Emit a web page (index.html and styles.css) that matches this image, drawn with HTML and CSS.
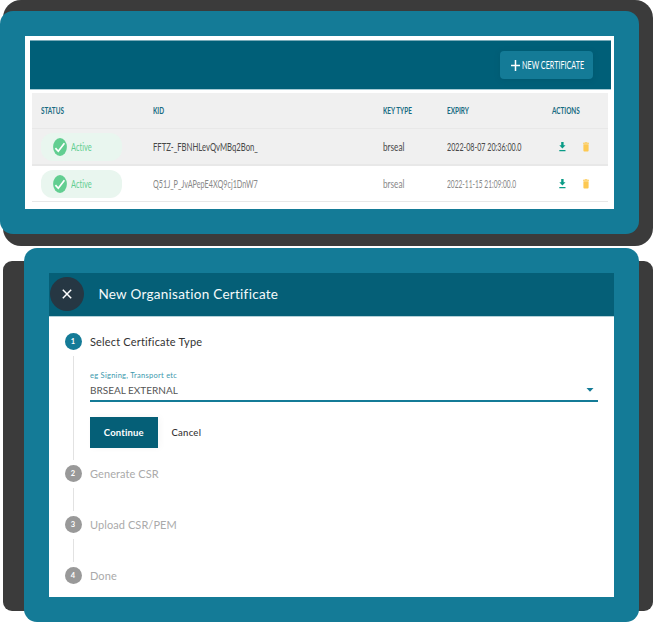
FILE: index.html
```
<!DOCTYPE html>
<html lang="en">
<head>
<meta charset="utf-8">
<title>Organisation Certificates</title>
<link rel="stylesheet" href="styles.css">
</head>
<body>
<svg class="defs" aria-hidden="true">
  <symbol id="check" viewBox="0 0 14 18"><ellipse cx="7" cy="9" rx="6.9" ry="9" fill="#62ce91"/><path d="M2.4 10.2 5.3 13.3 11.4 5.3" fill="none" stroke="#fff" stroke-width="1.7"/></symbol>
  <symbol id="download" viewBox="0 0 7 10"><path d="M2.2 0h2.4v3.3h1.9L3.4 6.6.3 3.3h1.9zM.3 8h6.2v1.3H.3z" fill="#099b86"/></symbol>
  <symbol id="trash" viewBox="0 0 6 10"><path d="M0 .7h1.5L2 .2h2l.5.5H6v1H0zM.4 2.2h5.2v6.3c0 .6-.3 1-.9 1H1.300c-.6 0-.9-.4-.9-1z" fill="#fdc952"/></symbol>
</svg>
<section class="stage list-stage">
  <div class="frame">
    <div class="list">
      <header class="toolbar"><button class="new"><svg class="plus" viewBox="0 0 9 11"><path d="M4.500 0v11M0 5.500h9" stroke="#fff" stroke-width="1.500"/></svg><span class="t new-label">NEW CERTIFICATE</span></button></header>
      <div class="table">
        <div class="row head"><span class="t">STATUS</span><span class="t">KID</span><span class="t">KEY TYPE</span><span class="t">EXPIRY</span><span class="t">ACTIONS</span></div>
        <div class="row selected"><div class="pill"><svg><use href="#check"/></svg><span class="t">Active</span></div><span class="t kid">FFTZ-_FBNHLevQvMBq2Bon_</span><span class="t">brseal</span><span class="t date">2022-08-07 20:36:00.0</span><div class="actions"><svg class="download"><use href="#download"/></svg><svg class="trash"><use href="#trash"/></svg></div></div>
        <div class="row second"><div class="pill"><svg><use href="#check"/></svg><span class="t">Active</span></div><span class="t kid">Q51J_P_JvAPepE4XQ9cj1DnW7</span><span class="t">brseal</span><span class="t date">2022-11-15 21:09:00.0</span><div class="actions"><svg class="download"><use href="#download"/></svg><svg class="trash"><use href="#trash"/></svg></div></div>
      </div>
    </div>
  </div>
</section>
<section class="stage form-stage">
  <div class="frame">
    <div class="dialog">
      <header class="title"><button class="close"><svg viewBox="0 0 10 10"><path d="m.8.8 8.400 8.400M9.200.8.8 9.200" stroke="#fff" stroke-width="1.500"/></svg></button><h1>New Organisation Certificate</h1></header>
      <ol class="steps">
        <li class="step current"><div class="rail"><b>1</b><i></i></div><div class="content"><h2>Select Certificate Type</h2>
          <div class="hint">eg Signing, Transport etc</div>
          <div class="select"><span>BRSEAL EXTERNAL</span><svg viewBox="0 0 7 4"><path d="M0 0h7L3.500 3.800z" fill="#147b97"/></svg></div>
          <div class="buttons"><button class="continue">Continue</button><button class="cancel">Cancel</button></div></div></li>
        <li class="step"><div class="rail"><b>2</b><i></i></div><h2>Generate CSR</h2></li>
        <li class="step"><div class="rail"><b>3</b><i></i></div><h2>Upload CSR/PEM</h2></li>
        <li class="step"><div class="rail"><b>4</b></div><h2>Done</h2></li>
      </ol>
    </div>
  </div>
</section>
</body>
</html>
```
FILE: styles.css
```
* { box-sizing: border-box; }
body { margin: 0; width: 653px; background: #fff; font-family: Lato, "Open Sans", sans-serif; font-variant-ligatures: none; }
button { border: 0; padding: 0; font: inherit; letter-spacing: inherit; }
h1, h2 { margin: 0; font-weight: 400; }
svg { display: block; flex: none; }
.defs { position: absolute; width: 0; height: 0; }

.stage { position: relative; z-index: 0; }
.stage::before { content: ""; position: absolute; z-index: -1; background: #3b3b3b; }
.frame { background: #147b97; padding: 25px; }
.list-stage { height: 246px; padding: 11px 14px 12px 0; }
.list-stage::before { inset: 0 0 0 3px; border-radius: 18px; }
.list-stage .frame { height: 223px; border-radius: 13px; }
.form-stage { height: 374px; margin-top: 2px; padding: 0 14px 0 24px; }
.form-stage::before { inset: 13px 0 11px 3px; border-radius: 9px; }
.form-stage .frame { height: 374px; border-radius: 13px; }

.list { height: 173px; background: #fff; padding: 4px 3px 0 5px; }
.toolbar { height: 49px; background: #005f78; border-top: 1px solid #78aab8; box-shadow: 0 1px 0 #a6cbd5; display: flex; justify-content: flex-end; padding: 10px 18px 0 0; }
.new { width: 93px; height: 28px; border-radius: 4px; background: #147b97; color: #fff; display: flex; align-items: center; gap: 2px; padding-left: 11px; box-shadow: 0 1px 5px #00506766; }
.plus { width: 9px; height: 11px; }
.t { display: block; width: max-content; white-space: nowrap; transform: scaleX(.78); transform-origin: left center; }
.new .new-label { font-size: 10.500px; transform: scaleX(.685); }
.table { margin: 4px 3px 0 2px; }
.row { height: 37px; display: grid; grid-template-columns: 112px 230px 64px 105px 56px; align-items: center; padding-left: 9px; border-bottom: 1px solid #e8e8e8; color: #888; font-size: 10.500px; }
.head { height: 36px; background: #f0f0f0; color: #176b82; font-size: 8.500px; font-weight: 700; }
.head .t { transform: scaleX(.75); }
.selected { background: #f0f0f0; color: #484848; border-bottom-width: 2px; }
.second { height: 36px; }
.pill { width: 80.500px; height: 28px; border-radius: 12px; background: #e9f6ef; display: flex; align-items: center; padding-left: 12px; gap: 4px; color: #62ce91; }
.pill svg { width: 14px; height: 18px; }
.pill .t { transform: scaleX(.71); }
.kid { transform: scaleX(.733); }
.second .kid { transform: scaleX(.69); }
.date { transform: scaleX(.68); }
.second .date { transform: scaleX(.63); }
.actions { display: flex; align-items: center; padding-left: 6.500px; gap: 17px; }
.download { width: 7px; height: 10px; }
.trash { width: 6px; height: 10px; }

.dialog { height: 324px; background: #fff; }
.title { height: 43px; background: #055f77; box-shadow: 0 1px 0 #b4d1d8; display: flex; align-items: center; gap: 14px; padding: 0 0 1px 1.400px; }
.close { width: 34px; height: 34px; border-radius: 50%; background: #263743; display: grid; place-items: center; }
.close svg { width: 10px; height: 10px; }
h1 { color: #f5fafb; font-size: 13.500px; letter-spacing: .28px; }
.steps { list-style: none; margin: 0; padding: 17px 16px 0 15.500px; }
.step { display: flex; gap: 8.500px; height: 51px; color: #aaa; }
.current { height: 132px; color: #333; }
.rail { width: 17px; display: flex; flex-direction: column; align-items: center; }
.rail b { width: 17px; height: 17px; border-radius: 50%; background: #999; color: #fff; font-size: 7.500px; line-height: 17px; text-align: center; }
.current .rail b { background: #147b97; }
.rail i { width: 1px; flex: 1; margin: 6px 0 5px; background: #e2e2e2; }
h2 { font-size: 11px; line-height: 18px; letter-spacing: .08px; }
.current h2 { letter-spacing: .17px; }
.content { width: 508px; }
.hint { color: #3c99ad; font-size: 7.500px; line-height: 10px; margin-top: 20px; letter-spacing: .27px; }
.select { display: flex; justify-content: space-between; align-items: center; height: 21px; padding: 0 4px 2px 0; border-bottom: 2px solid #147b97; font-size: 10px; color: #555; }
.select svg { width: 8px; height: 4px; }
.buttons { display: flex; align-items: center; gap: 14px; margin-top: 15px; font-size: 9.500px; font-weight: 700; letter-spacing: .15px; }
.continue { width: 67.500px; height: 31px; color: #fff; background: #055f77; box-shadow: 2px 0 7px #00000009; }
.cancel { color: #333; background: none; font-weight: 500; letter-spacing: .25px; }
```
